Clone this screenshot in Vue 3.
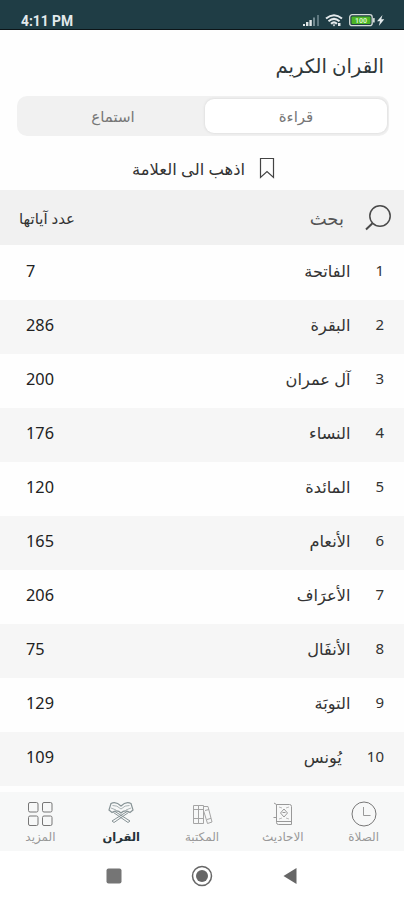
<script setup>
import { ref } from 'vue';

const activeTab = ref('read');
const activeNav = ref('quran');

const surahs = [
    { number: 1, name: 'الفاتحة', verses: 7 },
    { number: 2, name: 'البقرة', verses: 286 },
    { number: 3, name: 'آل عمران', verses: 200 },
    { number: 4, name: 'النساء', verses: 176 },
    { number: 5, name: 'المائدة', verses: 120 },
    { number: 6, name: 'الأنعام', verses: 165 },
    { number: 7, name: 'الأعرَاف', verses: 206 },
    { number: 8, name: 'الأنفَال', verses: 75 },
    { number: 9, name: 'التوبَة', verses: 129 },
    { number: 10, name: 'يُونس', verses: 109 }
];

const navItems = [
    { id: 'prayer', label: 'الصلاة' },
    { id: 'hadith', label: 'الاحاديث' },
    { id: 'library', label: 'المكتبة' },
    { id: 'quran', label: 'القران' },
    { id: 'more', label: 'المزيد' }
];
</script>

<template>
    <div class="screen" dir="rtl">
        <div class="status-bar" dir="ltr">
            <span class="time">4:11 PM</span>
            <svg class="status-icons" width="84" height="16" viewBox="0 0 84 16">
                <g fill="#dfe6e8">
                    <rect x="1" y="11" width="2" height="2" />
                    <rect x="4" y="9" width="2.4" height="4" />
                    <rect x="7.4" y="7" width="2.4" height="6" />
                    <rect x="11" y="4.5" width="2" height="8.5" fill="#738b92" />
                    <rect x="15" y="2" width="2" height="11" fill="#5d777f" />
                </g>
                <g fill="none" stroke="#e4eaec" stroke-width="2">
                    <path d="M24 5.500Q32 -1 40 5.500" />
                    <path d="M26.500 8.200Q32 3.500 37.500 8.200" />
                    <path d="M29 10.800Q32 8 35 10.800" />
                </g>
                <path d="M30.500 11.500h3L32 13.500zM36 10h2.500v3H36z" fill="#e4eaec" />
                <rect x="47.700" y="1.700" width="22.500" height="11" rx="2.500" fill="#1f3d45" stroke="#d5dcd9" stroke-width="1.300" />
                <rect x="49.500" y="3.400" width="19" height="7.600" rx="1" fill="#4bb525" />
                <rect x="71" y="5" width="1.700" height="4.500" rx=".5" fill="#d5dcd9" />
                <text x="59" y="10" text-anchor="middle" class="battery-text">100</text>
                <path d="M80.500 2L75 8.300h3L76.800 13l5.500-6.700h-3z" fill="#e4eaec" />
            </svg>
        </div>

        <h1 class="title">القران الكريم</h1>

        <div class="tabs">
            <button class="tab" :class="{ active: activeTab === 'read' }" @click="activeTab = 'read'">قراءة</button>
            <button class="tab" :class="{ active: activeTab === 'listen' }" @click="activeTab = 'listen'">استماع</button>
        </div>

        <div class="bookmark">
            <svg width="16" height="22" viewBox="0 0 16 22" fill="none" stroke="#444" stroke-width="1.200">
                <path d="M1.500 1.500h13v19L8 14.500l-6.500 6z" />
            </svg>
            <span>اذهب الى العلامة</span>
        </div>

        <div class="search">
            <svg width="28" height="28" viewBox="0 0 28 28" fill="none" stroke="#4a4a4a" stroke-width="1.500">
                <circle cx="16" cy="12" r="10.200" />
                <path d="M8.500 19.300L2 25.500" stroke-width="2" />
            </svg>
            <span class="search-label">بحث</span>
            <span class="count-label">عدد آياتها</span>
        </div>

        <div class="list">
            <div v-for="surah in surahs" :key="surah.number" class="row">
                <span class="number">{{ surah.number }}</span>
                <span class="name">{{ surah.name }}</span>
                <span class="verses">{{ surah.verses }}</span>
            </div>
        </div>

        <div class="nav">
            <div v-for="item in navItems" :key="item.id" class="nav-item" :class="{ active: activeNav === item.id }">
                <svg width="28" height="28" viewBox="0 0 28 28" fill="none" stroke="currentColor">
                    <g v-if="item.id === 'prayer'" stroke="#777">
                        <circle cx="14" cy="14" r="12" />
                        <path d="M13.500 7v8.500h7" stroke="#999" />
                    </g>
                    <g v-else-if="item.id === 'hadith'" stroke="#999">
                        <path d="M7.500 4.500h13q2 0 2 2v18h-13q-2 0-2-2zM7.500 21.500h15M5 3l2.500 1.500M4.500 17.500h3" />
                        <path d="M10 7l3 1M20 7l-3 1M10 19l3-1M20 19l-3-1" stroke="#bbb" />
                        <path d="M15 9l3.500 4-3.500 4-3.500-4zM13.500 12.500h3" />
                    </g>
                    <g v-else-if="item.id === 'library'" stroke="#a5a5a5">
                        <path d="M5.500 5.500h5v18h-5zM10.500 5.500h5v18h-5zM5.500 9.500h10M5.500 18.500h10M15.500 6.500h4.500l4 15.500-4.500 1.500-4-13M17 10.500l4-1M19 19.500l4-1.200" />
                    </g>
                    <g v-else-if="item.id === 'quran'" stroke="#879396">
                        <path d="M14 6Q9 1 4 3.500L2 10l3 2.500Q10 9 14 13Q18 9 23 12.500L26 10l-2-6.500Q19 1 14 6z" stroke-width="1.200" />
                        <path d="M5.500 5.500Q10 5 14 9Q18 5 22.500 5.500M4 8l5 2M24 8l-5 2" stroke="#aab3b5" />
                        <path d="M8 11.500l15 9.500-2 1.500L6.500 12.500M20 11.500L5 21l2 1.500 14.500-10" />
                    </g>
                    <g v-else stroke="#777">
                        <rect x="2.500" y="2.500" width="9.500" height="9.500" rx="1.500" />
                        <rect x="16.500" y="2.500" width="9.500" height="9.500" rx="1.500" />
                        <rect x="2.500" y="16" width="9.500" height="9.500" rx="1.500" />
                        <rect x="16.500" y="16" width="9.500" height="9.500" rx="1.500" />
                    </g>
                </svg>
                <span class="nav-label">{{ item.label }}</span>
            </div>
        </div>

        <div class="system-bar" dir="ltr">
            <svg width="16" height="16" viewBox="0 0 16 16">
                <rect x=".5" y=".5" width="15" height="15" rx="2" fill="#757575" />
            </svg>
            <svg width="22" height="22" viewBox="0 0 22 22">
                <circle cx="11" cy="11" r="9.500" fill="none" stroke="#666" stroke-width="1.500" />
                <circle cx="11" cy="11" r="6" fill="#666" />
            </svg>
            <svg width="16" height="18" viewBox="0 0 16 18">
                <path d="M14.500 1v16L1.500 9z" fill="#666" />
            </svg>
        </div>
    </div>
</template>

<style>
body {
    margin: 0;
    background: #fff;
}
</style>

<style scoped>
.screen {
    display: flex;
    flex-direction: column;
    width: 404px;
    height: 900px;
    overflow: hidden;
    background: #fefefe;
    color: #333;
    font-family: "Noto Sans", "DejaVu Sans", sans-serif;
}

.status-bar {
    display: flex;
    justify-content: space-between;
    align-items: flex-start;
    box-sizing: border-box;
    height: 30px;
    padding: 13px 18px 0 21px;
    background: #1f3d45;
    border-bottom: 1px solid #0c1518;
}

.time {
    font-family: Roboto, sans-serif;
    font-size: 13.8px;
    line-height: 16px;
    font-weight: 700;
    color: #e3eaec;
}

.battery-text {
    font: 700 7px Roboto, sans-serif;
    fill: #d8f5c8;
}

.title {
    display: flex;
    align-items: center;
    height: 66px;
    margin: 0;
    padding: 4px 20px 0;
    box-sizing: border-box;
    font-size: 19.6px;
    font-weight: 400;
    color: #30383a;
}

.tabs {
    display: flex;
    box-sizing: border-box;
    height: 40px;
    margin: 0 15px 0 17px;
    padding: 3px 2px 3px 0;
    background: #f1f1f1;
    border-radius: 10px;
}

.tab {
    flex: 1;
    border: none;
    border-radius: 9px;
    background: none;
    padding: 0 0 0 4px;
    font-family: inherit;
    font-size: 15px;
    color: #777;
}

.tab.active {
    flex: 0 0 182px;
    padding: 0;
    background: #fff;
    box-shadow: 0 0 2px 1px #e2e2e2;
}

.bookmark {
    display: flex;
    align-items: center;
    justify-content: center;
    gap: 14px;
    height: 54px;
    padding: 10px 0 0 3px;
    box-sizing: border-box;
    font-size: 16.4px;
}

.search {
    display: flex;
    align-items: center;
    box-sizing: border-box;
    height: 55px;
    padding: 0 12px 0 19px;
    background: #f1f1f1;
}

.search-label {
    margin-right: 20px;
    font-size: 18px;
    color: #555;
}

.count-label {
    margin-right: auto;
    font-size: 15px;
}

.list {
    box-sizing: border-box;
    height: 547px;
    padding-top: 1px;
}

.row {
    display: flex;
    align-items: center;
    box-sizing: border-box;
    height: 54px;
    padding: 0 20px 4px 26px;
}

.row:nth-child(even) {
    background: #f6f6f6;
}

.number {
    padding-bottom: 3px;
    font-size: 15px;
}

.name {
    margin-right: 25px;
    font-size: 16.2px;
}

.verses {
    margin-right: auto;
    font-size: 16.3px;
    color: #222;
}

.nav {
    display: flex;
    height: 59px;
    background: #f7f8f8;
}

.nav-item {
    display: flex;
    flex: 1;
    flex-direction: column;
    align-items: center;
    padding-top: 8px;
    color: #999;
}

.nav-label {
    font-size: 12px;
    line-height: 18px;
}

.nav-item.active .nav-label {
    font-size: 11.5px;
    font-weight: 700;
    color: #263238;
}

.system-bar {
    display: flex;
    flex: 1;
    align-items: center;
    justify-content: center;
    gap: 69px;
    background: #fff;
}
</style>
